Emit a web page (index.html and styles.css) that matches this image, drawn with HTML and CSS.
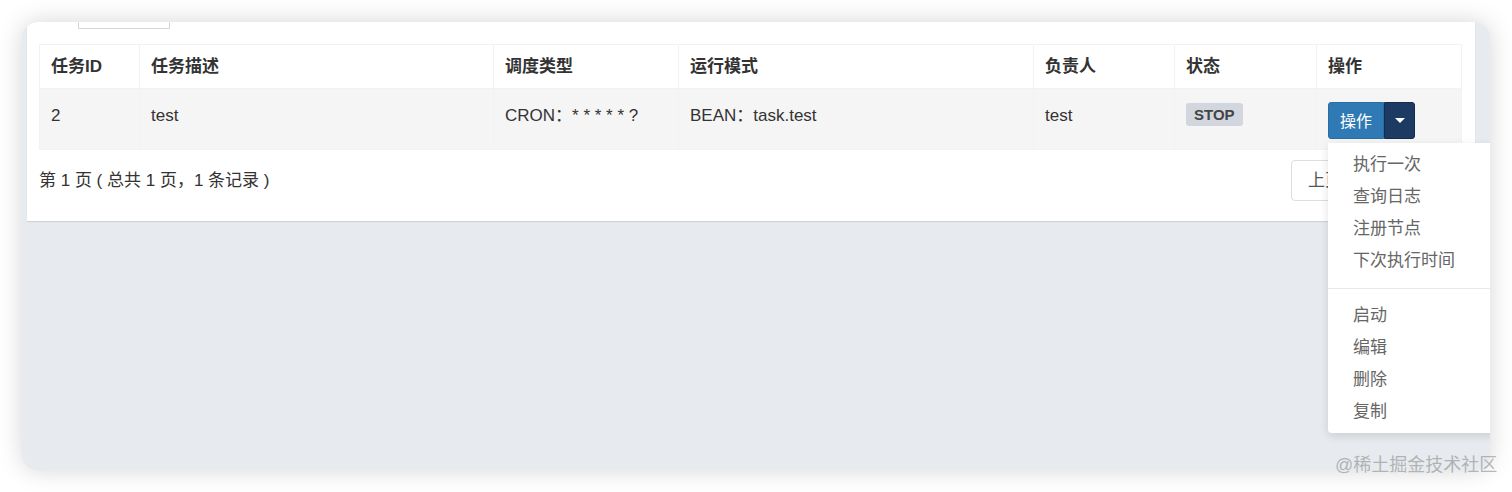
FILE: index.html
```html
<!DOCTYPE html>
<html lang="zh-CN">
<head>
<meta charset="utf-8">
<title>任务列表</title>
<link rel="stylesheet" href="styles.css">
</head>
<body>
<div class="window">
  <div class="card">
    <div class="filters"><div class="fake-input"></div></div>
    <table class="grid">
      <colgroup>
        <col class="c1"><col class="c2"><col class="c3"><col class="c4"><col class="c5"><col class="c6"><col class="c7">
      </colgroup>
      <thead>
        <tr>
          <th>任务ID</th><th>任务描述</th><th>调度类型</th><th>运行模式</th><th>负责人</th><th>状态</th><th>操作</th>
        </tr>
      </thead>
      <tbody>
        <tr>
          <td>2</td>
          <td>test</td>
          <td>CRON：* * * * * ?</td>
          <td>BEAN：task.test</td>
          <td>test</td>
          <td><span class="label">STOP</span></td>
          <td class="action">
            <div class="btn-group">
              <span class="btn-main">操作</span>
              <span class="btn-toggle"><span class="caret"></span></span>
              <ul class="menu">
                <li>执行一次</li>
                <li>查询日志</li>
                <li>注册节点</li>
                <li>下次执行时间</li>
                <li class="divider"></li>
                <li>启动</li>
                <li>编辑</li>
                <li>删除</li>
                <li>复制</li>
              </ul>
            </div>
          </td>
        </tr>
      </tbody>
    </table>
    <div class="pager-row">
      <span class="pager-info">第 1 页 ( 总共 1 页，1 条记录 )</span>
      <div class="pager-btns"><span class="pbtn first">上页</span><span class="pbtn last">下页</span></div>
    </div>
  </div>
</div>
<div class="watermark">@稀土掘金技术社区</div>
</body>
</html>
```

FILE: styles.css
```css
* { box-sizing: border-box; }
html, body {
  margin: 0;
  padding: 0;
}
body {
  width: 1512px;
  height: 492px;
  overflow: hidden;
  background: #ffffff;
  font-family: "Liberation Sans", "Noto Sans CJK SC", sans-serif;
  color: #333;
  position: relative;
}
.window {
  margin: 22px 0 0 22px;
  width: 1468px;
  height: 448px;
  border-radius: 16px;
  overflow: hidden;
  background: #e7eaee;
  box-shadow: 0 0 24px rgba(0, 0, 0, 0.17);
}
.card {
  margin: 0 15px 0 5px;
  background: #fff;
  padding: 0 14px 20px 12px;
  box-shadow: 0 1px 1px rgba(0, 0, 0, 0.1);
}
.filters {
  height: 7px;
  padding-left: 39px;
}
.fake-input {
  width: 92px;
  height: 7px;
  border: 1px solid #d2d6de;
  border-top: 0;
}
.grid {
  margin-top: 15px;
  width: 1422px;
  table-layout: fixed;
  border-collapse: collapse;
  font-size: 17px;
}
.c1 { width: 100px; }
.c2 { width: 354px; }
.c3 { width: 185px; }
.c4 { width: 355px; }
.c5 { width: 141px; }
.c6 { width: 142px; }
.c7 { width: 145px; }
.grid th, .grid td {
  border: 1px solid #f2f2f2;
  text-align: left;
  vertical-align: top;
  padding: 10px 11px 10px;
  line-height: 23px;
  white-space: nowrap;
}
.grid th {
  font-weight: bold;
  color: #333;
  background: #fff;
}
.grid td {
  padding: 13px 11px 10px;
  line-height: 28px;
  background: #f5f5f5;
  color: #333;
}
.grid td.action {
  line-height: 24px;
}
.label {
  display: inline-block;
  margin-top: 1px;
  height: 23px;
  line-height: 23px;
  padding: 0 8px;
  background: #d2d6de;
  color: #444;
  font-weight: bold;
  font-size: 15px;
  border-radius: 3px;
  vertical-align: top;
}
.btn-group {
  position: relative;
  display: inline-flex;
  height: 37px;
  vertical-align: top;
}
.btn-main {
  width: 56px;
  height: 37px;
  line-height: 37px;
  text-align: center;
  background: #2f79b4;
  color: #fff;
  font-size: 16px;
  border: 1px solid #2a6da3;
  border-radius: 3px 0 0 3px;
}
.btn-toggle {
  width: 31px;
  height: 37px;
  display: flex;
  align-items: center;
  justify-content: center;
  background: #1c3a62;
  border: 1px solid #142c4d;
  border-radius: 0 3px 3px 0;
}
.caret {
  width: 0;
  height: 0;
  border-top: 5px solid #fff;
  border-left: 5px solid transparent;
  border-right: 5px solid transparent;
}
.menu {
  position: absolute;
  top: 41px;
  left: 0;
  width: 175px;
  margin: 0;
  padding: 6px 0 5px;
  list-style: none;
  background: #fff;
  border-radius: 0 0 4px 4px;
  box-shadow: 0 3px 10px rgba(0, 0, 0, 0.12);
  z-index: 5;
}
.menu li {
  padding: 0 25px;
  line-height: 32px;
  height: 32px;
  color: #666;
  font-size: 17px;
}
.menu li.divider {
  height: 1px;
  margin: 11px 0;
  padding: 0;
  background: #e8e8e8;
}
.pager-row {
  margin-top: 10px;
  height: 41px;
  display: flex;
  align-items: center;
  justify-content: space-between;
}
.pager-info {
  font-size: 17px;
  line-height: 24px;
  color: #333;
}
.pager-btns {
  display: flex;
  height: 41px;
}
.pbtn {
  width: 85px;
  height: 41px;
  line-height: 39px;
  padding-left: 16px;
  border: 1px solid #ddd;
  color: #555;
  font-size: 17px;
  background: #fff;
}
.pbtn.first { border-radius: 4px 0 0 4px; }
.pbtn.last { border-left: 0; border-radius: 0 4px 4px 0; }
.watermark {
  position: absolute;
  left: 1335px;
  top: 454px;
  font-size: 18px;
  line-height: 22px;
  color: rgba(140, 140, 140, 0.6);
  white-space: nowrap;
}
```
